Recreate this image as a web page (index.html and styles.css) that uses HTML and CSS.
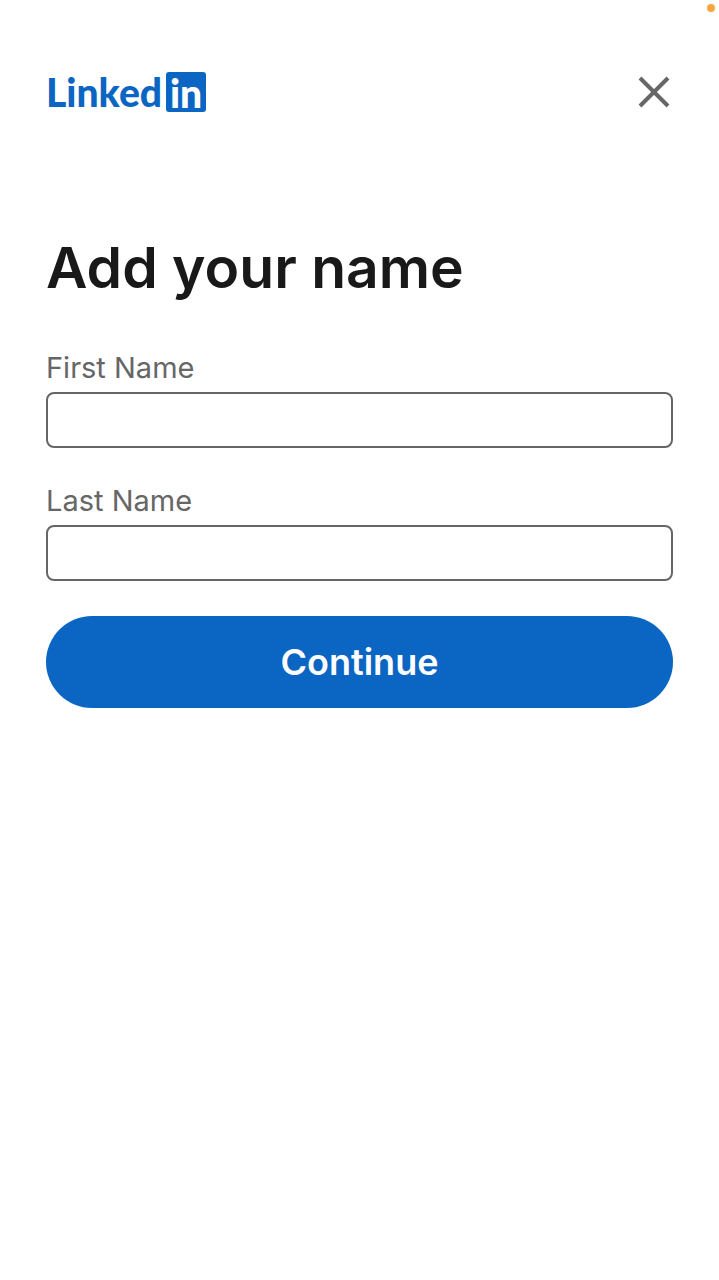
FILE: index.html
```html
<!DOCTYPE html>
<html lang="en">
<head>
<meta charset="utf-8">
<meta name="viewport" content="width=device-width, initial-scale=1">
<title>Add your name</title>
<link rel="stylesheet" href="styles.css">
</head>
<body>
<span class="recording-dot" aria-hidden="true"></span>
<header class="header">
  <a class="logo" href="#"><span class="logo-word">Linked</span><span class="logo-badge">in</span></a>
  <button class="close" type="button" aria-label="Close">
    <svg class="close-icon" viewBox="0 0 32 32" aria-hidden="true"><path d="M2 2L30 30M30 2L2 30"/></svg>
  </button>
</header>
<main>
  <h1 class="title">Add your name</h1>
  <form class="form">
    <div class="field">
      <label class="label" for="first-name">First Name</label>
      <input class="input" id="first-name" type="text">
    </div>
    <div class="field">
      <label class="label" for="last-name">Last Name</label>
      <input class="input" id="last-name" type="text">
    </div>
    <button class="submit" type="submit">Continue</button>
  </form>
</main>
</body>
</html>
```

FILE: styles.css
```css
* {
  box-sizing: border-box;
}

body {
  margin: 0;
  padding: 72px 46px 46px;
  background: #fff;
  color: #191919;
  font-family: Inter, "Liberation Sans", sans-serif;
}

.recording-dot {
  position: absolute;
  top: 4px;
  right: 4px;
  width: 8px;
  height: 8px;
  border-radius: 50%;
  background: #f7a63c;
}

.header {
  display: flex;
  align-items: center;
  justify-content: space-between;
  height: 40px;
}

.logo {
  display: flex;
  align-items: center;
  gap: 4px;
  color: #0a66c2;
  font: 900 39px/42px Lato, sans-serif;
  text-decoration: none;
}

.logo-badge {
  width: 40px;
  height: 40px;
  border-radius: 3px;
  background: #0a66c2;
  color: #fff;
  text-align: center;
}

.close {
  display: flex;
  margin-right: 3px;
  padding: 0;
  border: 0;
  background: none;
}

.close-icon {
  width: 32px;
  height: 32px;
  fill: none;
  stroke: #666;
  stroke-width: 4;
}

.title {
  margin: 120px 0 46px;
  font-size: 57px;
  font-weight: 600;
  line-height: 72px;
}

.form,
.field {
  display: flex;
  flex-direction: column;
}

.form {
  gap: 35px;
}

.label {
  padding-bottom: 6px;
  color: #666;
  font-size: 29px;
  line-height: 36px;
}

.input {
  width: 100%;
  height: 56px;
  padding: 0 16px;
  border: 2px solid #666;
  border-radius: 8px;
  background: #fff;
  color: #191919;
  font: inherit;
  font-size: 29px;
}

.submit {
  height: 92px;
  border: 0;
  border-radius: 46px;
  background: #0a66c2;
  color: #fff;
  font: inherit;
  font-size: 36px;
  font-weight: 600;
}
```
